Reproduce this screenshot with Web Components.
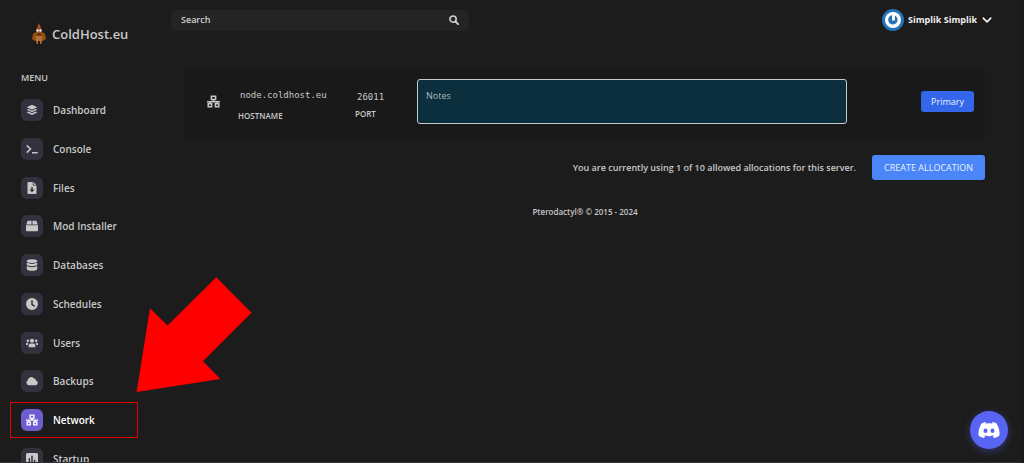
<!DOCTYPE html>
<html lang="en">
<head>
<meta charset="utf-8">
<meta name="viewport" content="width=device-width, initial-scale=1">
<title>ColdHost.eu - Network</title>
<style>
  html { background: #1c1c1c; }
  body { margin: 0; font: 600 10px/16px "Open Sans", "Noto Sans", sans-serif; color: #c8c8c8; }
</style>
</head>
<body>
<host-app></host-app>
<script>
const ICONS = {
  layers: '<path d="M8 1 15 4.3 8 7.6 1 4.3Z"/><path d="M3 6.5 8 8.9 13 6.5 15 7.6 8 11 1 7.6Z"/><path d="M3 10 8 12.4 13 10 15 11.2 8 14.7 1 11.2Z"/>',
  terminal: '<path d="M1 3.2 6 8 1 12.8M8 13h7.500" fill="none" stroke="currentColor" stroke-width="2"/>',
  file: '<path fill-rule="evenodd" d="M3 0h6v4.500h5V15a1 1 0 0 1-1 1H3a1 1 0 0 1-1-1V1a1 1 0 0 1 1-1Zm4 6.500V10H4.500L8 13.500 11.500 10H9V6.500Z"/><path d="M10 0 13.500 3.500H10Z"/>',
  box: '<path d="M3 1h4.400v5H.5L2 1.700Q2.300 1 3 1ZM8.600 1H13q.7 0 1 .7L15.500 6H8.600ZM0 7h16v7q0 1-1 1H1q-1 0-1-1Z"/>',
  database: '<ellipse cx="8" cy="2.800" rx="7" ry="2.600"/><path d="M1 4.800q7 3.400 14 0v2.600q-1 2.200-7 2.200T1 7.400ZM1 9.200q7 3.400 14 0v4q-1 2.600-7 2.600t-7-2.600Z"/>',
  clock: '<path fill-rule="evenodd" d="M8 0a8 8 0 1 1 0 16A8 8 0 0 1 8 0ZM7 3v6l4 3 1.200-1.600L9 8V3Z"/>',
  users: '<circle cx="8" cy="5" r="2.800"/><circle cx="2.500" cy="5" r="1.700"/><circle cx="13.500" cy="5" r="1.700"/><path d="M3.500 13.500V11q0-2.500 2.500-2.500h4q2.500 0 2.500 2.500v2.500ZM0 10.500V9q0-1.500 1.500-1.500h2Q2.500 8.500 2.300 10.500ZM16 10.500V9q0-1.500-1.500-1.500h-2q1 1 1.200 3Z"/>',
  cloud: '<path d="M3.500 13.500A3.500 3.500 0 0 1 2.300 7 4.500 4.500 0 0 1 10.500 4.600 2.600 2.600 0 0 1 13.200 7.400 3.100 3.100 0 0 1 13 13.500Z"/>',
  network: '<path fill="none" stroke="currentColor" stroke-width="1.800" d="M5.400 1.500h5.200v4H5.400ZM1.500 10.800h4.200v3.700H1.500ZM10.300 10.800h4.200v3.700h-4.200ZM8 5.500v2.600M0 8.200h16M3.600 8.200v2.600M12.400 8.200v2.600"/>',
  chart: '<path fill-rule="evenodd" d="M2 0h12q2 0 2 2v12q0 2-2 2H2q-2 0-2-2V2Q0 0 2 0Zm1.500 7v5.500h2V7ZM7 3.500v9h2v-9ZM10.500 9v3.500h2V9Z"/>',
  search: '<circle cx="6.500" cy="6.500" r="5" fill="none" stroke="currentColor" stroke-width="2.600"/><path d="M10.500 10.500 14.500 14.500" stroke="currentColor" stroke-width="3" stroke-linecap="round"/>',
  chevron: '<path d="M2 5 8 11 14 5" fill="none" stroke="currentColor" stroke-width="2.600" stroke-linecap="round" stroke-linejoin="round"/>'
};

function define(name, markup, setup) {
  const template = document.createElement('template');
  template.innerHTML = markup;
  customElements.define(name, class extends HTMLElement {
    connectedCallback() {
      if (this.shadowRoot) return;
      this.attachShadow({ mode: 'open' }).append(template.content.cloneNode(true));
      if (setup) setup(this, this.shadowRoot);
    }
  });
}

define('ui-icon', `
  <style>
    :host { display: block; width: 12px; height: 12px; flex: none; }
    svg { display: block; width: 100%; height: 100%; fill: currentColor; }
  </style>
  <svg viewBox="0 0 16 16" aria-hidden="true"></svg>`,
  (el, root) => { root.querySelector('svg').innerHTML = ICONS[el.getAttribute('name')]; });

define('nav-item', `
  <style>
    :host { display: flex; align-items: center; position: relative; }
    a { display: flex; align-items: center; gap: 10px; color: #c8c8c8; text-decoration: none; }
    .tile { display: grid; place-items: center; width: 22px; height: 22px; border-radius: 6px; background: #34313f; }
    :host([active]) a { color: #fff; }
    :host([active]) .tile { background: #6c5ecf; }
    .mark { display: none; }
    :host([active]) .mark { display: block; position: absolute; inset: 1px 22px 1px -11px; border: 1px solid #e00000; }
  </style>
  <a href="#"><span class="tile"><ui-icon></ui-icon></span><slot></slot></a>
  <span class="mark"></span>`,
  (el, root) => {
    const icon = document.createElement('ui-icon');
    icon.setAttribute('name', el.getAttribute('icon'));
    root.querySelector('ui-icon').replaceWith(icon);
    if (el.hasAttribute('active')) root.querySelector('a').setAttribute('aria-current', 'page');
  });

define('brand-logo', `
  <style>
    :host { display: block; }
    a { display: flex; align-items: center; gap: 6px; color: inherit; text-decoration: none; font-size: 13px; line-height: 22px; }
    svg { width: 14px; height: 22px; }
  </style>
  <a href="#">
    <svg viewBox="0 0 14 22" aria-hidden="true">
      <path d="M7 0 9 5 10 10H4L5 5Z" fill="#a4522a"/>
      <path d="M1 11 4 9 7 11 10 9 13 11 14 16 11 18 9 17H5L3 18 0 16Z" fill="#9a520f"/>
      <path d="M4 11h6l-1 5H5Z" fill="#6f3c12"/>
      <path d="M4 13h6v5L9 21H8V18H6v3H5L4 18Z" fill="#b56f3a"/>
      <circle cx="5.500" cy="7.500" r="1.300" fill="#e8e2da"/><circle cx="8.500" cy="7.500" r="1.300" fill="#e8e2da"/>
    </svg>
    <slot></slot>
  </a>`);

define('side-bar', `
  <style>
    :host { display: block; height: 100vh; overflow: hidden; padding: 23px 0 0 21px; box-sizing: border-box; }
    brand-logo { margin-left: 11px; }
    h2 { margin: 25px 0 5px; font-size: 9px; line-height: 16px; font-weight: 600; }
    nav { display: grid; grid-auto-rows: 1fr; min-height: 387px; }
  </style>
  <brand-logo>ColdHost.eu</brand-logo>
  <h2>MENU</h2>
  <nav aria-label="Menu">
    <nav-item icon="layers">Dashboard</nav-item>
    <nav-item icon="terminal">Console</nav-item>
    <nav-item icon="file">Files</nav-item>
    <nav-item icon="box">Mod Installer</nav-item>
    <nav-item icon="database">Databases</nav-item>
    <nav-item icon="clock">Schedules</nav-item>
    <nav-item icon="users">Users</nav-item>
    <nav-item icon="cloud">Backups</nav-item>
    <nav-item icon="network" active>Network</nav-item>
    <nav-item icon="chart">Startup</nav-item>
  </nav>`);

define('search-box', `
  <style>
    :host { display: flex; align-items: center; width: 100%; max-width: 298px; box-sizing: border-box; height: 21px; padding: 0 10px; border-radius: 5px; background: #242424; }
    input { flex: 1; min-width: 0; padding: 0; border: 0; outline: 0; background: none; color: inherit; font: inherit; font-size: 9px; }
    input::placeholder { color: #d0d0d0; opacity: 1; }
    button { padding: 0; border: 0; background: none; color: #d0d0d0; }
    ui-icon { width: 10px; height: 10px; }
  </style>
  <input type="search" placeholder="Search" aria-label="Search">
  <button type="button" aria-label="Run search"><ui-icon name="search"></ui-icon></button>`);

define('user-menu', `
  <style>
    :host { display: block; flex: none; }
    button { display: flex; align-items: center; gap: 4px; padding: 0; border: 0; background: none; color: #f0f0f0; font: inherit; font-size: 9px; font-weight: 700; }
    svg { width: 22px; height: 22px; }
    ui-icon { width: 10px; height: 10px; margin-left: 1px; }
  </style>
  <button type="button" aria-haspopup="true">
    <svg viewBox="0 0 22 22" aria-hidden="true">
      <circle cx="11" cy="11" r="11" fill="#2472b8"/><circle cx="11" cy="11" r="8" fill="#fff"/>
      <path d="M7.500 7.500A4.700 4.700 0 1 0 14 7.200L12.500 6.500V11H10V6Z" fill="#2472b8"/>
      <path d="M10 3h2.800v8.500H10Z" fill="#fff"/>
    </svg>
    <slot></slot>
    <ui-icon name="chevron"></ui-icon>
  </button>`);

define('allocation-row', `
  <style>
    :host { display: flex; align-items: center; padding: 10px 11px 15px 22px; border-radius: 4px; background: #191919; }
    ui-icon { width: 13px; height: 13px; margin-right: 18px; }
    dl { display: flex; flex-direction: column-reverse; margin: 0; padding-top: 6px; }
    dt { font-size: 8px; line-height: 12px; }
    dd { margin: 0; padding: 0 2px; font: 400 9px/14px "DejaVu Sans Mono", monospace; }
    .host { width: 117px; gap: 8px; }
    .port { width: 62px; gap: 4px; }
    textarea { flex: 1; max-width: 430px; min-width: 80px; height: 45px; box-sizing: border-box; padding: 8px; border: 1px solid #c2cbd0; border-radius: 3px; background: #0b2f3d; color: inherit; font: 400 9px/16px "Open Sans", sans-serif; resize: none; }
    textarea::placeholder { color: #b0bbbf; opacity: 1; }
    button { margin-left: auto; height: 21px; padding: 0 10px; border: 0; border-radius: 3px; background: #3366e8; color: #eef2ff; font: 400 9px/16px "Open Sans", sans-serif; }
  </style>
  <ui-icon name="network"></ui-icon>
  <dl class="host"><dt>HOSTNAME</dt><dd>node.coldhost.eu</dd></dl>
  <dl class="port"><dt>PORT</dt><dd>26011</dd></dl>
  <textarea placeholder="Notes" aria-label="Notes"></textarea>
  <button type="button">Primary</button>`);

define('network-page', `
  <style>
    :host { display: block; padding: 38px 36px 0 14px; }
    .actions { display: flex; align-items: center; justify-content: flex-end; gap: 16px; margin-top: 16px; }
    p { margin: 0; font-size: 9px; }
    button { height: 25px; padding: 0 12px; border: 0; border-radius: 3px; background: #4a86f7; color: #e8f0ff; font: 400 9px/16px "Open Sans", sans-serif; }
    footer { margin-top: 24px; text-align: center; font-size: 8px; line-height: 16px; }
  </style>
  <allocation-row></allocation-row>
  <div class="actions">
    <p>You are currently using 1 of 10 allowed allocations for this server.</p>
    <button type="button">CREATE ALLOCATION</button>
  </div>
  <footer>Pterodactyl® © 2015 - 2024</footer>`);

define('discord-button', `
  <style>
    :host { display: block; }
    button { display: grid; place-items: center; width: 38px; height: 38px; padding: 0; border: 0; border-radius: 50%; background: #5865f2; box-shadow: 0 2px 8px #5865f266; }
    svg { width: 22px; height: 18px; }
  </style>
  <button type="button" aria-label="Open Discord chat">
    <svg viewBox="0 0 22 18" aria-hidden="true">
      <path fill="#fff" fill-rule="evenodd" d="M8 1 7.300 2.500Q11 1.900 14.700 2.500L14 1q2.500.3 4.500 1.500Q22 8 21.500 14.500 19 16.700 16 17l-1.200-2q1-.3 1.800-.9-5.600 2.300-11.200 0 .8.600 1.800.9L6 17q-3-.3-5.500-2.500Q0 8 3.500 2.500 5.500 1.300 8 1ZM7.500 7.500a2 2.200 0 1 0 0 4.400 2 2.200 0 0 0 0-4.400Zm7 0a2 2.200 0 1 0 0 4.400 2 2.200 0 0 0 0-4.400Z"/>
    </svg>
  </button>`);

define('pointer-arrow', `
  <style>
    :host { display: block; width: 116px; height: 116px; pointer-events: none; }
    svg { display: block; }
  </style>
  <svg width="116" height="116" viewBox="0 0 116 116" aria-hidden="true">
    <path fill="#f00" d="M80.300.2 115.500 35.700 67 84.300 84.300 102 .6 115 14 31.200 31.500 48.500Z"/>
  </svg>`);

define('host-app', `
  <style>
    :host { display: grid; grid-template-columns: 160px minmax(0, 1fr); height: 100vh; overflow: hidden; position: relative; box-sizing: border-box; border-right: 3px solid #191919; }
    main { padding: 9px 0 0 11px; }
    header { display: flex; align-items: center; justify-content: space-between; gap: 16px; height: 22px; padding-right: 29px; }
    pointer-arrow { position: absolute; left: 136px; top: 277px; }
    discord-button { position: absolute; right: 13px; bottom: 14px; }
    .edge { position: absolute; inset: auto 0 0 0; height: 1px; background: #30303a; }
  </style>
  <side-bar></side-bar>
  <main>
    <header>
      <search-box></search-box>
      <user-menu>Simplik Simplik</user-menu>
    </header>
    <network-page></network-page>
  </main>
  <pointer-arrow></pointer-arrow>
  <discord-button></discord-button>
  <div class="edge"></div>`);
</script>
</body>
</html>
